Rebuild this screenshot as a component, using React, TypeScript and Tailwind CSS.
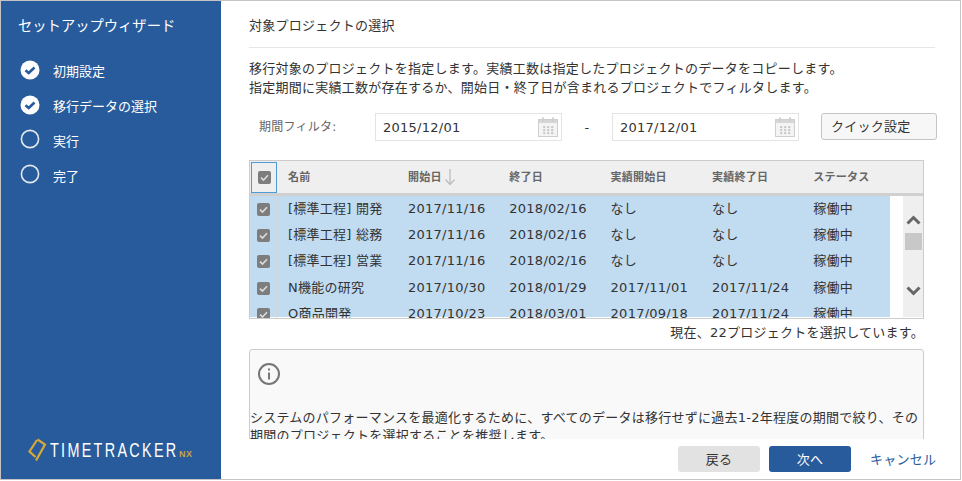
import React from "react";

const font = { fontFamily: '"DejaVu Sans","Noto Sans CJK JP",sans-serif' };

const rows = [
  ["[標準工程] 開発", "2017/11/16", "2018/02/16", "なし", "なし", "稼働中"],
  ["[標準工程] 総務", "2017/11/16", "2018/02/16", "なし", "なし", "稼働中"],
  ["[標準工程] 営業", "2017/11/16", "2018/02/16", "なし", "なし", "稼働中"],
  ["N機能の研究", "2017/10/30", "2018/01/29", "2017/11/01", "2017/11/24", "稼働中"],
  ["O商品開発", "2017/10/23", "2018/03/01", "2017/09/18", "2017/11/24", "稼働中"],
];

function Check({ done }: { done: boolean }) {
  return (
    <svg width="20" height="20" viewBox="0 0 20 20" className={done ? "shrink-0" : "shrink-0 -translate-y-px"}>
      {done ? (
        <>
          <circle cx="10" cy="10" r="9.5" fill="#fff" />
          <path d="M5.5 10.2 L8.7 13 L14.5 7.5" fill="none" stroke="#285b9c" strokeWidth="2.6" />
        </>
      ) : (
        <circle cx="10" cy="10" r="8.6" fill="none" stroke="#e4e9f1" strokeWidth="1.6" />
      )}
    </svg>
  );
}

function Box() {
  return (
    <div className="flex h-[13px] w-[13px] items-center justify-center rounded-[2px] bg-[#7d7d7d]">
      <svg width="11" height="11" viewBox="0 0 11 11">
        <path d="M2 5.6 L4.5 8 L9 3.2" fill="none" stroke="#dcdcdc" strokeWidth="1.6" />
      </svg>
    </div>
  );
}

function Cal() {
  return (
    <svg width="21" height="21" viewBox="0 0 21 21">
      <rect x="0.5" y="2.5" width="19" height="17" fill="#f4f4f4" stroke="#cfcfcf" />
      <rect x="1" y="3" width="18" height="3" fill="#d6d6d6" />
      <rect x="4" y="0.5" width="2" height="4" fill="#cfcfcf" />
      <rect x="14" y="0.5" width="2" height="4" fill="#cfcfcf" />
      {[5, 9, 13].map((x) =>
        [9, 12, 15].map((y) => <rect key={`${x}-${y}`} x={x} y={y} width="2.4" height="2.2" rx="1" fill="#c8c8c8" />)
      )}
    </svg>
  );
}

function DateInput({ value }: { value: string }) {
  return (
    <div className="flex h-[28px] w-[187px] items-center justify-between border border-[#e4e4e4] bg-white pl-[7px] pr-[2px] text-[13px] text-[#333]">
      <span>{value}</span>
      <Cal />
    </div>
  );
}

function Logo() {
  return (
    <div className="flex items-center">
      <svg width="19" height="24" viewBox="0 0 19 24" className="shrink-0">
        <path d="M9 2 L1.5 13.5 L7.5 19 M9.5 1.5 L17 6.5 L8 22.5" fill="none" stroke="#d9a936" strokeWidth="2.2" />
      </svg>
      <div className="ml-[3px] w-[127px] shrink-0">
        <div
          className="origin-left scale-x-[0.72] text-[20px] leading-[24px] font-normal tracking-[3.2px] whitespace-nowrap text-white"
          style={{ fontFamily: '"Liberation Sans",sans-serif' }}
        >
          TIMETRACKER
        </div>
      </div>
      <span
        className="mt-[8px] ml-[2px] text-[9px] leading-[12px] font-bold tracking-[0.6px] text-[#c9a43c]"
        style={{ fontFamily: '"Liberation Sans",sans-serif' }}
      >
        NX
      </span>
    </div>
  );
}

const cols = "w-[101.3px] shrink-0";

export default function App() {
  return (
    <div
      className="flex h-[480px] w-[961px] overflow-hidden border border-[#c4c4c4] bg-white text-[13px] leading-[19px] tracking-[0.25px] text-[#333]"
      style={font}
    >
      <aside className="flex w-[220px] shrink-0 flex-col bg-[#285b9c] pl-[17px] tracking-normal text-white">
        <div className="mt-[15px] text-[14.3px] leading-[20px]">セットアップウィザード</div>
        <div className="mt-[24px] flex flex-col gap-[15px]">
          {[
            ["初期設定", true],
            ["移行データの選択", true],
            ["実行", false],
            ["完了", false],
          ].map(([t, d]) => (
            <div key={t as string} className="flex h-[20px] items-center pl-[2px]">
              <Check done={d as boolean} />
              <span className="ml-[13px] translate-y-[1px]">{t as string}</span>
            </div>
          ))}
        </div>
        <div className="mt-auto mb-[17px] pl-[10px]">
          <Logo />
        </div>
      </aside>

      <main className="flex min-w-0 flex-1 flex-col pl-[28px]">
        <div className="h-[438px] overflow-hidden">
          <div className="mr-[25px] border-b border-[#e6e6e6] pt-[15px] pb-[11px] leading-[20px]">対象プロジェクトの選択</div>
          <p className="mt-[11px] leading-[19px] whitespace-nowrap">
            移行対象のプロジェクトを指定します。実績工数は指定したプロジェクトのデータをコピーします。
            <br />
            指定期間に実績工数が存在するか、開始日・終了日が含まれるプロジェクトでフィルタします。
          </p>
          <div className="mt-[16px] flex items-start">
            <div className="flex h-[28px] w-[126px] items-center pl-[10px] text-[12px] text-[#666]">期間フィルタ:</div>
            <DateInput value="2015/12/01" />
            <div className="flex h-[28px] w-[50px] items-center justify-center">-</div>
            <DateInput value="2017/12/01" />
            <div className="ml-[22px] flex h-[27px] w-[116px] items-center rounded-[3px] border border-[#c4c4c4] bg-[#f7f7f7] pl-[9px]">
              クイック設定
            </div>
          </div>

          <div className="mt-[19px] h-[159px] w-[675px] overflow-hidden border border-[#cccccc]">
            <div className="flex h-[35px] border-b-[3px] border-[#d0d0d0] bg-[#efefef] text-[11px] font-bold text-[#666]">
              <div className="mt-px ml-px flex h-[31px] w-[26px] shrink-0 items-center justify-center border border-[#4a9bd8]">
                <Box />
              </div>
              <div className="flex w-[613px] items-center">
                <div className="w-[131px] shrink-0 pl-[11px]">名前</div>
                <div className={`${cols} flex items-center gap-[2px]`}>
                  開始日
                  <svg width="12" height="18" viewBox="0 0 12 18">
                    <path d="M6 1 V16 M1.5 11.5 L6 16.5 L10.5 11.5" fill="none" stroke="#bdbdbd" strokeWidth="1.3" />
                  </svg>
                </div>
                <div className={cols}>終了日</div>
                <div className={cols}>実績開始日</div>
                <div className={cols}>実績終了日</div>
                <div className="flex-1">ステータス</div>
              </div>
            </div>
            <div className="flex h-[121px]">
              <div className="w-[640px] shrink-0 bg-[#c1dbf1]">
                {rows.map((r) => (
                  <div key={r[0]} className="flex h-[26.4px] items-center">
                    <div className="flex h-full w-[27px] shrink-0 items-center justify-center border-r border-[#d7d7d7]">
                      <Box />
                    </div>
                    <div className="-mt-[2px] w-[131px] shrink-0 pl-[11px]">{r[0]}</div>
                    {r.slice(1, 5).map((c, i) => (
                      <div key={i} className={`-mt-[2px] ${cols}`}>
                        {c}
                      </div>
                    ))}
                    <div className="-mt-[2px] flex-1">{r[5]}</div>
                  </div>
                ))}
              </div>
              <div className="w-[13px] shrink-0" />
              <div className="flex flex-1 flex-col items-center bg-[#efefef] pt-[19px]">
                <svg width="15" height="10" viewBox="0 0 15 10">
                  <path d="M1.5 8.5 L7.5 2.5 L13.5 8.5" fill="none" stroke="#666" strokeWidth="3" />
                </svg>
                <div className="mt-[8px] h-[17px] w-[17px] bg-[#c8c8c8]" />
                <svg width="15" height="10" viewBox="0 0 15 10" className="mt-[36px]">
                  <path d="M1.5 1.5 L7.5 7.5 L13.5 1.5" fill="none" stroke="#666" strokeWidth="3" />
                </svg>
              </div>
            </div>
          </div>

          <div className="mt-[3px] w-[675px] text-right leading-[22px]">現在、22プロジェクトを選択しています。</div>

          <div className="mt-[5px] h-[130px] w-[675px] rounded-[3px] border border-[#cccccc] bg-[#f9f9f9]">
            <svg width="24" height="24" viewBox="0 0 24 24" className="mt-[12px] ml-[7px]">
              <circle cx="12" cy="12" r="10" fill="none" stroke="#777" strokeWidth="2" />
              <rect x="11" y="10.5" width="2" height="7" fill="#777" />
              <rect x="11" y="6.5" width="2" height="2" fill="#777" />
            </svg>
            <p className="mt-[23px] leading-[18px] whitespace-nowrap">
              システムのパフォーマンスを最適化するために、すべてのデータは移行せずに過去1-2年程度の期間で絞り、その
              <br />
              期間のプロジェクトを選択することを推奨します。
            </p>
          </div>
        </div>

        <div className="mt-[7px] flex items-center">
          <div className="ml-[429px] flex h-[26px] w-[82px] items-center justify-center rounded-[3px] bg-[#e2e2e2]">戻る</div>
          <div className="ml-[9px] flex h-[26px] w-[82px] items-center justify-center rounded-[3px] bg-[#285b9c] text-white">次へ</div>
          <div className="ml-[19px] whitespace-nowrap text-[#285b9c]">キャンセル</div>
        </div>
      </main>
    </div>
  );
}
